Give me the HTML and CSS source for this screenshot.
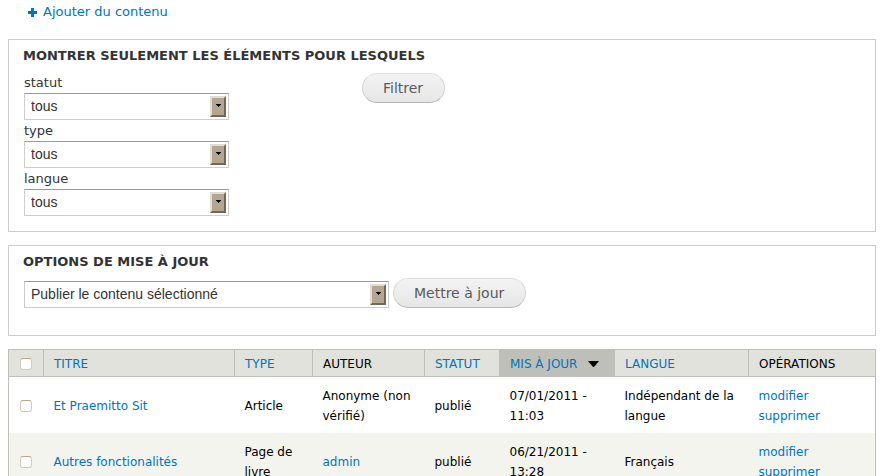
FILE: index.html
```html
<!DOCTYPE html>
<html lang="fr">
<head>
<meta charset="utf-8">
<title>Contenu</title>
<link rel="stylesheet" href="styles.css">
</head>
<body>
<main class="page">
  <ul class="action-links">
    <li><a class="action-link" href="#"><svg class="plus" viewBox="0 0 9 9" aria-hidden="true"><path d="M3 0h3v3h3v3H6v3H3V6H0V3h3z"/></svg>Ajouter du contenu</a></li>
  </ul>

  <form>
    <section class="panel panel-filter">
      <h2 class="panel-title">Montrer seulement les éléments pour lesquels</h2>
      <div class="filters">
        <div class="filter-fields">
          <label class="field-label" for="statut">statut</label>
          <div class="select-wrap">
            <select class="select" id="statut"><option>tous</option></select>
            <span class="arrow" aria-hidden="true"><svg class="arrow-icon" viewBox="0 0 5 3"><path d="M0 0h5v1H4v1H3v1H2V2H1V1H0z"/></svg></span>
          </div>
          <label class="field-label" for="type">type</label>
          <div class="select-wrap">
            <select class="select" id="type"><option>tous</option></select>
            <span class="arrow" aria-hidden="true"><svg class="arrow-icon" viewBox="0 0 5 3"><path d="M0 0h5v1H4v1H3v1H2V2H1V1H0z"/></svg></span>
          </div>
          <label class="field-label" for="langue">langue</label>
          <div class="select-wrap">
            <select class="select" id="langue"><option>tous</option></select>
            <span class="arrow" aria-hidden="true"><svg class="arrow-icon" viewBox="0 0 5 3"><path d="M0 0h5v1H4v1H3v1H2V2H1V1H0z"/></svg></span>
          </div>
        </div>
        <button class="button" type="button">Filtrer</button>
      </div>
    </section>

    <section class="panel panel-update">
      <h2 class="panel-title">Options de mise à jour</h2>
      <div class="update-row">
        <div class="select-wrap select-wide">
          <select class="select" aria-label="Options de mise à jour"><option>Publier le contenu sélectionné</option></select>
          <span class="arrow" aria-hidden="true"><svg class="arrow-icon" viewBox="0 0 5 3"><path d="M0 0h5v1H4v1H3v1H2V2H1V1H0z"/></svg></span>
        </div>
        <button class="button" type="button">Mettre à jour</button>
      </div>
    </section>

    <table class="content-table">
      <colgroup>
        <col class="col-check"><col><col class="col-type"><col class="col-author"><col class="col-status"><col class="col-updated"><col class="col-language"><col class="col-operations">
      </colgroup>
      <thead>
        <tr>
          <th class="check-cell"><input class="check" type="checkbox" aria-label="Tout sélectionner"></th>
          <th><a href="#">Titre</a></th>
          <th><a href="#">Type</a></th>
          <th>Auteur</th>
          <th><a href="#">Statut</a></th>
          <th class="active"><a class="sort" href="#">Mis à jour<svg class="sort-icon" viewBox="0 0 11 6" aria-hidden="true"><path d="M0 0h11L6 6H5z"/></svg></a></th>
          <th><a href="#">Langue</a></th>
          <th>Opérations</th>
        </tr>
      </thead>
      <tbody>
        <tr>
          <td class="check-cell"><input class="check" type="checkbox" aria-label="Et Praemitto Sit"></td>
          <td><a href="#">Et Praemitto Sit</a></td>
          <td>Article</td>
          <td>Anonyme (non vérifié)</td>
          <td>publié</td>
          <td>07/01/2011 - 11:03</td>
          <td>Indépendant de la langue</td>
          <td><a href="#">modifier</a> <a href="#">supprimer</a></td>
        </tr>
        <tr class="even">
          <td class="check-cell"><input class="check" type="checkbox" aria-label="Autres fonctionalités"></td>
          <td><a href="#">Autres fonctionalités</a></td>
          <td>Page de livre</td>
          <td><a href="#">admin</a></td>
          <td>publié</td>
          <td>06/21/2011 - 13:28</td>
          <td>Français</td>
          <td><a href="#">modifier</a> <a href="#">supprimer</a></td>
        </tr>
      </tbody>
    </table>
  </form>
</main>
</body>
</html>
```
FILE: styles.css
```css
* { box-sizing: border-box; }

body {
  margin: 0;
  background: #fff;
  color: #333;
  font: 13px/20px "DejaVu Sans", sans-serif;
}

a { color: #0074bd; text-decoration: none; }

.page { padding: 2px 15px 0 8px; }

.action-links { list-style: none; margin: 0 0 16px; padding: 0 20px; }
.action-link { display: inline-flex; align-items: center; gap: 6px; }
.plus { width: 9px; height: 9px; fill: #0074bd; }

.panel {
  margin-bottom: 13px;
  padding: 6px 14px 15px;
  border: 1px solid #ccc;
}
.panel-update { padding-bottom: 27px; }
.panel-title {
  margin: 0;
  font-size: 13px;
  line-height: 20px;
  text-transform: uppercase;
}

.filters { display: flex; align-items: flex-start; padding: 7px 1px 0; }
.filter-fields { width: 338px; }
.field-label { display: block; line-height: 21px; }
.filter-fields .field-label:first-child { line-height: 20px; }

.select-wrap { position: relative; width: 205px; height: 27px; }
.select-wide { width: 365px; }
.select {
  display: block;
  width: 100%;
  height: 27px;
  padding: 0 24px 0 6px;
  border: 1px solid #ccc;
  border-top-color: #999;
  border-radius: 0;
  background: #fff;
  color: #333;
  font: 14px/20px "Liberation Sans", sans-serif;
  appearance: none;
}
.arrow {
  position: absolute;
  top: 3px;
  right: 3px;
  display: grid;
  place-items: center;
  width: 16px;
  height: 21px;
  border: 2px solid;
  border-color: #e1ddd3 #74675a #74675a #e1ddd3;
  background: #b5a68f;
  pointer-events: none;
}
.arrow-icon { width: 5px; height: 3px; margin-bottom: 2px; fill: #000; }

.button {
  height: 30px;
  padding: 0 21px 0 20px;
  border: 1px solid #e0e0e0;
  border-color: #e0e0e0 #d2d2d2 #b4b4b4;
  border-radius: 15px;
  background: linear-gradient(#f3f3f3, #e6e6e6);
  color: #5a5a5a;
  font: 14px/20px "DejaVu Sans", sans-serif;
}

.update-row { display: flex; align-items: flex-end; gap: 4px; padding: 6px 1px 0; }

.content-table {
  width: 100%;
  table-layout: fixed;
  border: 1px solid #bebfb9;
  border-collapse: collapse;
  color: #000;
  font-size: 12px;
  line-height: 20px;
}
.col-check { width: 35px; }
.col-type { width: 78px; }
.col-author { width: 112px; }
.col-status { width: 75px; }
.col-updated { width: 115px; }
.col-language { width: 134px; }
.col-operations { width: 127px; }

th, td { padding: 9px 5px 7px 10px; text-align: left; }
th {
  padding-top: 4px;
  padding-bottom: 2px;
  border: 1px solid #bebfb9;
  background: #e1e2dc;
  font-weight: normal;
  text-transform: uppercase;
}
.active { background: #bebfb9; }
.sort { display: flex; align-items: center; gap: 11px; }
.sort-icon { width: 11px; height: 6px; fill: #000; }
.even { background: #f3f4ee; }

.check-cell { padding-left: 11px; padding-right: 0; }
.check {
  display: block;
  width: 12px;
  height: 12px;
  margin: 0;
  border: 1px solid #d5cabb;
  border-top-color: #b8a68f;
  border-radius: 3px;
  background: #fff;
  appearance: none;
}
```
